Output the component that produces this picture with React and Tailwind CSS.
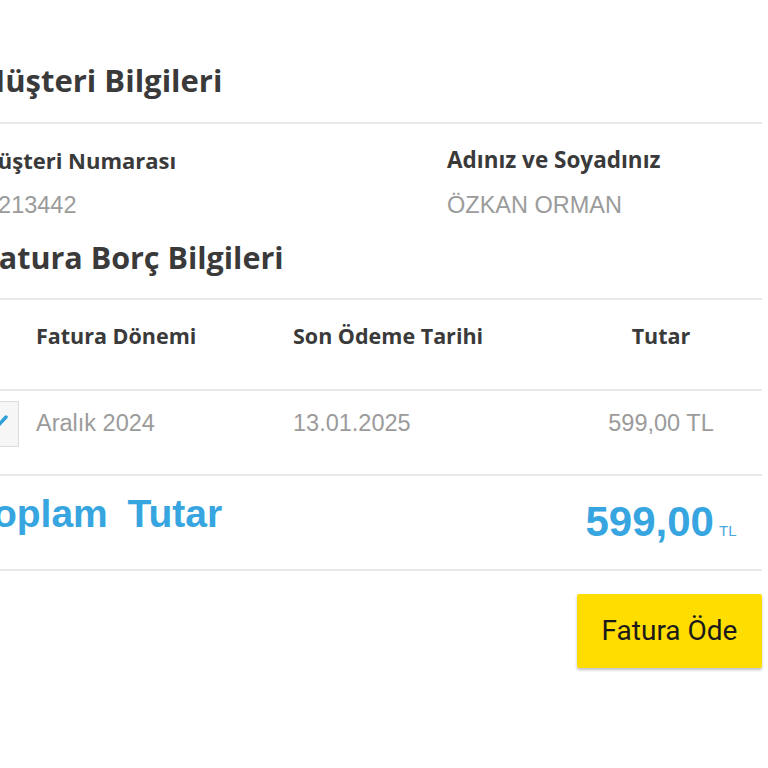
import React from "react";

function Line() {
  return <div className="h-[2px] w-full bg-[#e8e8e8]" />;
}

const headCls = "font-['Open_Sans','Noto_Sans',sans-serif] font-bold text-[#3a3a3a]";
const valCls = "font-['Liberation_Sans',Arial,sans-serif] text-[23.5px] text-[#9b9b9b]";
const cols = "grid grid-cols-[54px_257px_267px_202px]";

export default function App() {
  return (
    <div className="w-[768px] h-[768px] overflow-hidden bg-white">
      <div className="ml-[-18px] w-[780px] pt-[58px]">
        <h2 className={`${headCls} text-[31px] leading-[44px] ml-[-6px] mb-[20px]`}>Müşteri Bilgileri</h2>
        <Line />
        <div className="grid grid-cols-[465px_1fr] pt-[22px]">
          <div>
            <div className={`${headCls} text-[22px] leading-[28px] ml-[-5px]`}>Müşteri Numarası</div>
            <div className={`${valCls} leading-[28px] mt-[17px] ml-[3px]`}>5213442</div>
          </div>
          <div>
            <div className={`${headCls} text-[22.5px] leading-[28px]`}>Adınız ve Soyadınız</div>
            <div className={`${valCls} leading-[28px] mt-[17px]`}>ÖZKAN ORMAN</div>
          </div>
        </div>
        <h2 className={`${headCls} text-[30.5px] leading-[44px] mt-[16px] mb-[19px]`}>Fatura Borç Bilgileri</h2>
        <Line />
        <div className={`${cols} h-[89px] pt-[22px]`}>
          <div />
          <div className={`${headCls} text-[21.5px] leading-[28px]`}>Fatura Dönemi</div>
          <div className={`${headCls} text-[21.5px] leading-[28px]`}>Son Ödeme Tarihi</div>
          <div className={`${headCls} text-[21.5px] leading-[28px] text-center`}>Tutar</div>
        </div>
        <Line />
        <div className={`${cols} h-[83px] pt-[10px]`}>
          <div className="h-[46px] flex items-center">
            <div className="ml-[-7px] w-[44px] h-[46px] border border-[#dcdcdc] bg-[#f6f6f6] flex items-center justify-center">
              <svg width="26" height="22" viewBox="0 0 26 22" fill="none">
                <path d="M4 12 L9 18 L22 4" stroke="#2e9fd8" strokeWidth="3.5" strokeLinecap="round" strokeLinejoin="round" />
              </svg>
            </div>
          </div>
          <div className={`${valCls} h-[46px] flex items-center`}>Aralık 2024</div>
          <div className={`${valCls} h-[46px] flex items-center`}>13.01.2025</div>
          <div className={`${valCls} h-[46px] flex items-center justify-center`}>599,00 TL</div>
        </div>
        <Line />
        <div className="grid grid-cols-[578px_202px] h-[93px]">
          <div className="pt-[17px] ml-[-10px] font-['Liberation_Sans',Arial,sans-serif] text-[39px] leading-[42px] font-bold text-[#36a5e0] [word-spacing:9px]">
            Toplam Tutar
          </div>
          <div className="pt-[22px] flex justify-center items-baseline">
            <span className="font-['Liberation_Sans',Arial,sans-serif] text-[42px] leading-[48px] font-bold text-[#36a5e0]">599,00</span>
            <span className="ml-[5px] font-['Liberation_Sans',Arial,sans-serif] text-[15px] text-[#49a9dc]">TL</span>
          </div>
        </div>
        <Line />
        <div className="flex justify-end mt-[23px]">
          <button className="w-[185px] h-[74px] bg-[#ffdd00] rounded-[2px] shadow-[0_2px_3px_rgba(0,0,0,0.25)] font-['Roboto',sans-serif] text-[28px] text-[#1a1a1a]">
            Fatura Öde
          </button>
        </div>
      </div>
    </div>
  );
}
